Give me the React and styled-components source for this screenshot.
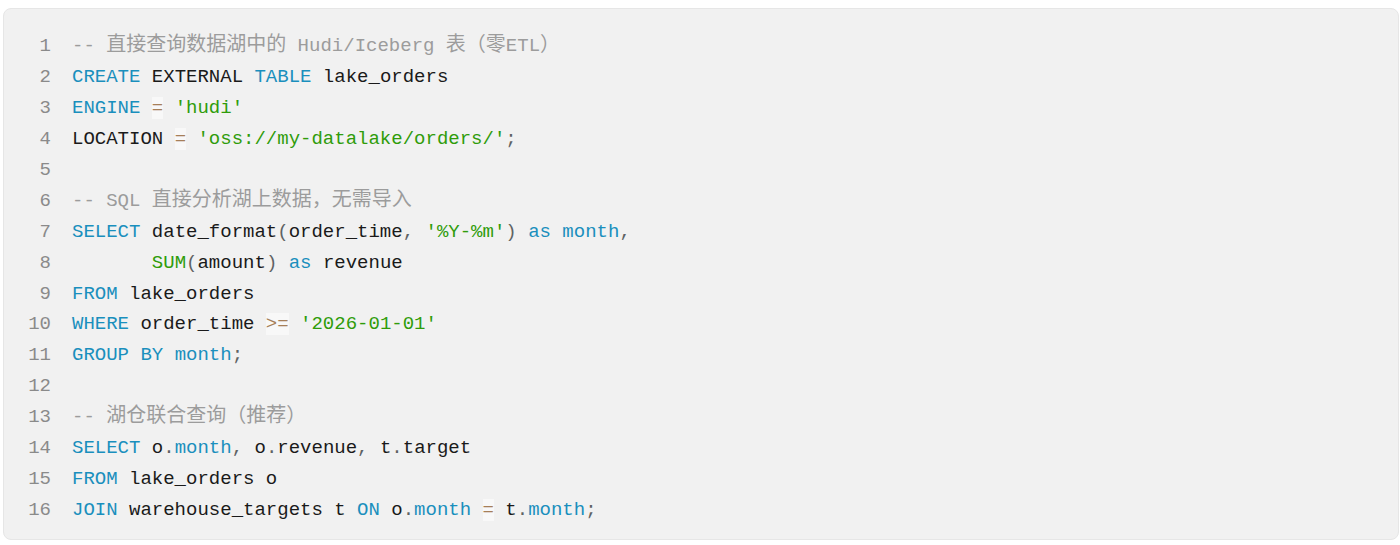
import React from "react";
import styled, { createGlobalStyle } from "styled-components";

const GlobalStyle = createGlobalStyle`
  html, body {
    margin: 0;
    padding: 0;
    background: #ffffff;
  }
  body {
    font-family: "Liberation Sans", Arial, sans-serif;
  }
`;

const Page = styled.div`
  padding: 8px 1px 5px 3px;
`;

const CodeBlock = styled.pre`
  margin: 0;
  background: #f1f1f1;
  border: 1px solid #e6e6e6;
  border-radius: 8px;
  padding: 22px 0 13px 24px;
  font-family: "Liberation Mono", "Noto Sans CJK SC", monospace;
  font-size: 19px;
  color: #1a1a1a;
  overflow: hidden;
`;

const Row = styled.div`
  display: grid;
  grid-template-columns: 23px 1fr;
  column-gap: 21px;
  height: 30.95px;
  line-height: 30.95px;
  white-space: pre;
`;

const LineNo = styled.span`
  text-align: right;
  color: #8a8a8a;
`;

const Code = styled.code`
  font-family: inherit;
`;

const tokenColors = {
  k: "#1a8fbd",
  s: "#2f9c0a",
  f: "#2f9c0a",
  o: "#a67f59",
  p: "#5f6364",
  c: "#9c9c9c",
  t: "inherit",
};

const Token = styled.span`
  color: ${(p) => tokenColors[p.$kind]};
  ${(p) => (p.$kind === "o" ? "background: rgba(255, 255, 255, 0.5);" : "")}
`;

const Cjk = styled.span`
  font-family: "Noto Sans CJK SC", sans-serif;
  font-size: 20px;
  line-height: 1;
`;

// split text so CJK runs get their own (wider) size
function withCjk(text) {
  const parts = text.split(/([\u3000-\u9fff\uff00-\uffef]+)/);
  return parts.map((part, i) =>
    i % 2 === 1 ? <Cjk key={i}>{part}</Cjk> : part
  );
}

const lines = [
  [["c", "-- 直接查询数据湖中的 Hudi/Iceberg 表（零ETL）"]],
  [["k", "CREATE"], ["t", " EXTERNAL "], ["k", "TABLE"], ["t", " lake_orders"]],
  [["k", "ENGINE"], ["t", " "], ["o", "="], ["t", " "], ["s", "'hudi'"]],
  [["t", "LOCATION "], ["o", "="], ["t", " "], ["s", "'oss://my-datalake/orders/'"], ["p", ";"]],
  [],
  [["c", "-- SQL 直接分析湖上数据，无需导入"]],
  [
    ["k", "SELECT"], ["t", " date_format"], ["p", "("], ["t", "order_time"], ["p", ","],
    ["t", " "], ["s", "'%Y-%m'"], ["p", ")"], ["t", " "], ["k", "as"], ["t", " "],
    ["k", "month"], ["p", ","],
  ],
  [["t", "       "], ["f", "SUM"], ["p", "("], ["t", "amount"], ["p", ")"], ["t", " "], ["k", "as"], ["t", " revenue"]],
  [["k", "FROM"], ["t", " lake_orders"]],
  [["k", "WHERE"], ["t", " order_time "], ["o", ">="], ["t", " "], ["s", "'2026-01-01'"]],
  [["k", "GROUP BY"], ["t", " "], ["k", "month"], ["p", ";"]],
  [],
  [["c", "-- 湖仓联合查询（推荐）"]],
  [
    ["k", "SELECT"], ["t", " o"], ["p", "."], ["k", "month"], ["p", ","], ["t", " o"], ["p", "."],
    ["t", "revenue"], ["p", ","], ["t", " t"], ["p", "."], ["t", "target"],
  ],
  [["k", "FROM"], ["t", " lake_orders o"]],
  [
    ["k", "JOIN"], ["t", " warehouse_targets t "], ["k", "ON"], ["t", " o"], ["p", "."], ["k", "month"],
    ["t", " "], ["o", "="], ["t", " t"], ["p", "."], ["k", "month"], ["p", ";"],
  ],
];

export default function App() {
  return (
    <Page>
      <GlobalStyle />
      <CodeBlock>
        {lines.map((tokens, i) => (
          <Row key={i}>
            <LineNo>{i + 1}</LineNo>
            <Code>
              {tokens.map(([kind, text], j) => (
                <Token key={j} $kind={kind}>
                  {kind === "c" ? withCjk(text) : text}
                </Token>
              ))}
            </Code>
          </Row>
        ))}
      </CodeBlock>
    </Page>
  );
}
